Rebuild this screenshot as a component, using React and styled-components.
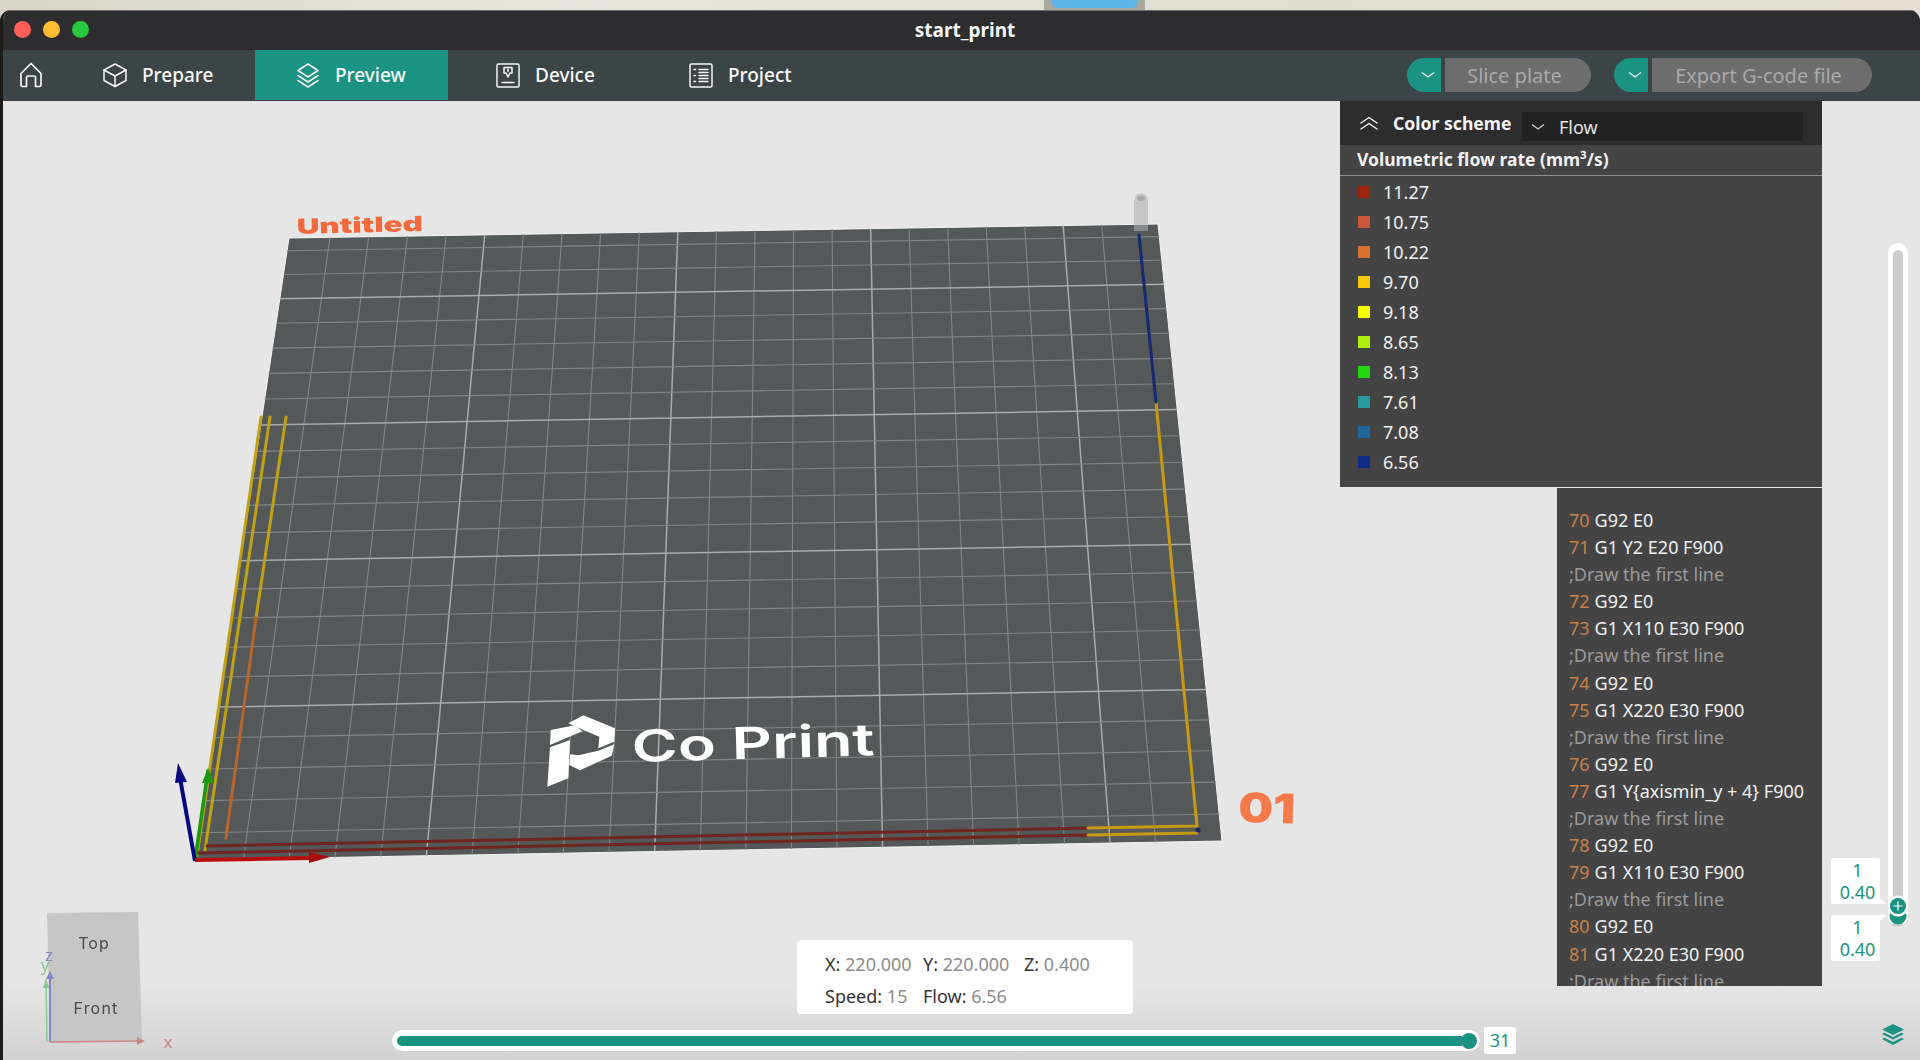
import React from 'react';
import styled, { createGlobalStyle } from 'styled-components';

const TEAL = '#1a9382';
const FONT = '"Noto Sans", "Open Sans", Arial, sans-serif';

const GlobalStyle = createGlobalStyle`
  html, body {
    margin: 0;
    padding: 0;
    background: #e6e6e6;
  }
  body {
    font-family: ${FONT};
  }
`;

const Page = styled.div`
  width: 1920px;
  height: 1060px;
  display: flex;
  flex-direction: column;
  overflow: hidden;
  background: linear-gradient(90deg, #d9d5cb, #e8e6de 30%, #dfdfd4 60%, #e6ded2);
`;

const Wallpaper = styled.div`
  height: 10px;
  flex: none;
  padding-left: 1044px;
`;

const DockTab = styled.div`
  width: 101px;
  height: 10px;
  box-sizing: border-box;
  padding: 0 8px 2px;
  background: #a9a9a2;

  &::before {
    content: '';
    display: block;
    height: 100%;
    background: #5cb4e8;
    border-radius: 0 0 5px 5px;
  }
`;

const Window = styled.div`
  flex: 1;
  min-height: 0;
  display: flex;
  flex-direction: column;
  border-left: 3px solid #1d1b17;
  border-radius: 11px 11px 0 0;
  overflow: hidden;
`;

const TitleBar = styled.div`
  height: 40px;
  flex: none;
  display: flex;
  align-items: center;
  position: relative;
  padding: 0 0 2px 11px;
  gap: 12px;
  background: #2d2d2f;
  border-top: 1px solid #6d6d6d;
  box-sizing: border-box;
`;

const Light = styled.span`
  width: 17px;
  height: 17px;
  border-radius: 50%;
  background: ${({ $color }) => $color};
`;

const Title = styled.div`
  position: absolute;
  left: 862px;
  width: 200px;
  text-align: center;
  color: #f6f6f6;
  font-size: 19px;
  font-weight: 700;
`;

const Toolbar = styled.div`
  height: 51px;
  flex: none;
  display: flex;
  align-items: stretch;
  padding-right: 48px;
  background: #3b4446;
  border-bottom: 1px solid #343c3e;
  box-sizing: border-box;
`;

const HomeTab = styled.div`
  width: 59px;
  box-sizing: border-box;
  padding-left: 16px;
  display: flex;
  align-items: center;
`;

const Tab = styled.div`
  width: 193px;
  box-sizing: border-box;
  padding-left: ${({ $pad }) => $pad}px;
  display: flex;
  align-items: center;
  gap: 14px;
  color: #f8f8f8;
  font-size: 19px;
  font-weight: 500;
  background: ${({ $active }) => ($active ? TEAL : 'transparent')};
`;

const Actions = styled.div`
  margin-left: auto;
  display: flex;
  align-items: center;
  gap: 23px;
`;

const ActionGroup = styled.div`
  display: flex;
  gap: 4px;
`;

const ActionToggle = styled.div`
  width: 34px;
  height: 34px;
  box-sizing: border-box;
  padding-left: 7px;
  display: flex;
  align-items: center;
  justify-content: center;
  background: ${TEAL};
  border-radius: 17px 0 0 17px;
`;

const ActionButton = styled.div`
  width: ${({ $width }) => $width}px;
  height: 34px;
  box-sizing: border-box;
  padding-right: 7px;
  display: flex;
  align-items: center;
  justify-content: center;
  background: #6d6d6d;
  border-radius: 0 17px 17px 0;
  color: #a9a9a9;
  font-size: 20px;
`;

const Viewport = styled.div`
  flex: 1;
  min-height: 0;
  position: relative;
  background: linear-gradient(180deg, #e6e6e6 0, #e6e6e6 92%, #d2d2d2 100%);
`;

const Scene = styled.svg`
  position: absolute;
  left: -3px;
  top: -101px;
  filter: blur(0.4px);
`;

const RightColumn = styled.div`
  position: absolute;
  top: 0;
  right: 98px;
  display: flex;
  flex-direction: column;
  align-items: flex-end;
  gap: 1px;
`;

const Legend = styled.div`
  width: 482px;
  height: 386px;
  background: #444;
  color: #f0f0f0;
  font-size: 18px;
`;

const LegendHeader = styled.div`
  height: 44px;
  display: flex;
  align-items: center;
  padding-left: 19px;
  background: #2d2d2d;
`;

const HeaderLabel = styled.div`
  width: 129px;
  margin-left: 14px;
  font-size: 17.6px;
  font-weight: 700;
  color: #f4f4f4;
  white-space: nowrap;
`;

const Select = styled.div`
  width: 281px;
  height: 29px;
  margin-top: 7px;
  display: flex;
  align-items: center;
  gap: 13px;
  padding-left: 8px;
  box-sizing: border-box;
  background: #222;
  border-radius: 2px;
  color: #e4e4e4;
`;

const LegendTitle = styled.div`
  height: 31px;
  line-height: 28px;
  padding-left: 17px;
  box-sizing: border-box;
  font-size: 17.5px;
  font-weight: 700;
  color: #f2f2f2;
  border-bottom: 1px solid #8c8c8c;
`;

const LegendList = styled.div`
  padding-top: 1px;
`;

const LegendRow = styled.div`
  height: 30px;
  display: flex;
  align-items: center;
  padding-left: 18px;
  gap: 13px;
`;

const Swatch = styled.span`
  width: 12px;
  height: 12px;
  background: ${({ $color }) => $color};
`;

const CodePanel = styled.div`
  width: 265px;
  height: 498px;
  box-sizing: border-box;
  padding: 19px 0 0 12px;
  overflow: hidden;
  background: #444;
  color: #f0f0f0;
  font-size: 18px;
`;

const CodeLine = styled.div`
  height: 27.1px;
  line-height: 27px;
  white-space: nowrap;
  color: ${({ $comment }) => ($comment ? '#9a9a9a' : '#f0f0f0')};
`;

const LineNo = styled.span`
  color: #c98048;
  margin-right: 5px;
`;

const LayerSlider = styled.div`
  position: absolute;
  top: 142px;
  right: 12px;
  width: 20px;
  height: 683px;
  padding: 7px 5px 0;
  box-sizing: border-box;
  background: #fff;
  border-radius: 10px;
`;

const LayerTrack = styled.div`
  height: 100%;
  background: #cdcdcd;
  border-radius: 5px 5px 0 0;
`;

const LayerHandle = styled.svg`
  position: absolute;
  left: 0;
  bottom: -1px;
`;

const ValueTip = styled.div`
  position: absolute;
  right: 28px;
  top: ${({ $top }) => $top}px;
  width: 49px;
  height: 46px;
  background: #fff;
  border-radius: 2px;
  color: ${TEAL};
  font-size: 18px;
  line-height: 22px;
  text-align: center;
  padding: 1px 0 0 4px;
  box-sizing: border-box;

  &::after {
    content: '';
    position: absolute;
    right: -6px;
    ${({ $up }) => ($up ? 'bottom: 0;' : 'top: 0;')}
    border-left: 7px solid #fff;
    ${({ $up }) => ($up ? 'border-top' : 'border-bottom')}: 7px solid transparent;
  }
`;

const LayersButton = styled.svg`
  position: absolute;
  right: 15px;
  bottom: 13px;
`;

const InfoBox = styled.div`
  position: absolute;
  left: 794px;
  bottom: 46px;
  width: 336px;
  height: 74px;
  box-sizing: border-box;
  padding: 8px 0 0 28px;
  display: grid;
  grid-template-columns: 98px 101px auto;
  grid-auto-rows: 32px;
  align-items: center;
  background: #fff;
  border-radius: 4px;
  color: #333;
  font-size: 18px;
  white-space: nowrap;
`;

const InfoValue = styled.span`
  color: #8c8c8c;
`;

const MoveSlider = styled.div`
  position: absolute;
  left: 389px;
  bottom: 9px;
  width: 1088px;
  height: 21px;
  box-sizing: border-box;
  padding: 6px 18px 5px 5px;
  background: #fff;
  border-radius: 11px;
`;

const MoveFill = styled.div`
  height: 100%;
  background: ${TEAL};
  border-radius: 5px 0 0 5px;
`;

const MoveKnob = styled.div`
  position: absolute;
  right: 3px;
  top: 2.5px;
  width: 16px;
  height: 16px;
  background: ${TEAL};
  border-radius: 50%;
`;

const MoveTip = styled.div`
  position: absolute;
  left: 1092px;
  top: -3px;
  width: 32px;
  height: 27px;
  line-height: 27px;
  text-align: center;
  background: #fff;
  border-radius: 2px;
  color: ${TEAL};
  font-size: 18px;
`;

const legend = [
  ['11.27', '#9c2411'],
  ['10.75', '#c9563b'],
  ['10.22', '#d9702c'],
  ['9.70', '#f6c80a'],
  ['9.18', '#fafa04'],
  ['8.65', '#aeee0c'],
  ['8.13', '#26d60c'],
  ['7.61', '#2a9aa0'],
  ['7.08', '#1b6798'],
  ['6.56', '#0e2c86'],
];

const COMMENT = ';Draw the first line';
const code = [
  [70, 'G92 E0'],
  [71, 'G1 Y2 E20 F900'],
  [null, COMMENT],
  [72, 'G92 E0'],
  [73, 'G1 X110 E30 F900'],
  [null, COMMENT],
  [74, 'G92 E0'],
  [75, 'G1 X220 E30 F900'],
  [null, COMMENT],
  [76, 'G92 E0'],
  [77, 'G1 Y{axismin_y + 4} F900'],
  [null, COMMENT],
  [78, 'G92 E0'],
  [79, 'G1 X110 E30 F900'],
  [null, COMMENT],
  [80, 'G92 E0'],
  [81, 'G1 X220 E30 F900'],
  [null, COMMENT],
];

// bed corners on screen, unit square -> quad
const makeBedMap = ([x0, y0], [x1, y1], [x2, y2], [x3, y3]) => {
  const sx = x0 - x1 + x2 - x3;
  const sy = y0 - y1 + y2 - y3;
  const dx1 = x1 - x2;
  const dx2 = x3 - x2;
  const dy1 = y1 - y2;
  const dy2 = y3 - y2;
  const den = dx1 * dy2 - dx2 * dy1;
  const g = (sx * dy2 - dx2 * sy) / den;
  const h = (dx1 * sy - sx * dy1) / den;
  const a = x1 - x0 + g * x1;
  const b = x3 - x0 + h * x3;
  const d = y1 - y0 + g * y1;
  const e = y3 - y0 + h * y3;
  return (u, v) => {
    const w = g * u + h * v + 1;
    return [(a * u + b * v + x0) / w, (d * u + e * v + y0) / w];
  };
};

const bed = makeBedMap([289, 238], [1158, 224], [1222, 841], [195, 860]);

const gridLines = [];
for (let n = 0; n < 21; n++) {
  const u = 0.047 + 0.0444 * n;
  gridLines.push({ from: bed(u, 0), to: bed(u, 1), major: n % 5 === 4 });
}
for (let k = 0; k < 22; k++) {
  const v = 0.024 + 0.0447 * k;
  gridLines.push({ from: bed(0, v), to: bed(1, v), major: k % 5 === 2 });
}

const Stroke = ({ d, color, width = 3 }) => (
  <path d={d} fill="none" stroke={color} strokeWidth={width} strokeLinecap="round" />
);

const BedScene = () => (
  <Scene width="1920" height="1060" viewBox="0 0 1920 1060">
    <polygon points="289,238 1158,224 1222,841 195,860" fill="#555859" stroke="#f4f4f4" strokeWidth="1" />
    {gridLines.map(({ from, to, major }, i) => (
      <line
        key={i}
        x1={from[0]}
        y1={from[1]}
        x2={to[0]}
        y2={to[1]}
        stroke={major ? '#a8abab' : '#828585'}
        strokeWidth={major ? 1.5 : 1.1}
      />
    ))}

    <text
      fontFamily={'Inter, "Open Sans", sans-serif'}
      fontWeight="900"
      fontSize="21"
      fill="#f2693d"
      textLength="126"
      lengthAdjust="spacingAndGlyphs"
      transform="translate(297 234) rotate(-1.4)"
    >
      Untitled
    </text>
    <text
      fontFamily={'Inter, "Open Sans", sans-serif'}
      fontWeight="900"
      fontSize="41"
      fill="#f47a4c"
      textLength="57"
      lengthAdjust="spacingAndGlyphs"
      transform="translate(1238 822) rotate(1.5)"
    >
      01
    </text>

    <g transform="translate(520 690) scale(0.3333)" fill="#fff">
      <polygon points="92,120 165,106 187,124 90,165" />
      <polygon points="90,172 150,150 145,265 82,290" />
      <polygon points="145,100 190,76 285,115 283,155 235,175 238,140 185,118" />
      <polygon points="283,163 275,197 180,241 148,225 150,193 175,196 235,182" />
    </g>
    <text
      fontFamily={'Inter, "Open Sans", sans-serif'}
      fontWeight="600"
      fontSize="44"
      fill="#fff"
      textLength="243"
      lengthAdjust="spacingAndGlyphs"
      transform="translate(632 762) rotate(-1.6)"
    >
      Co Print
    </text>

    <Stroke d="M261 417 L197 856" color="#bfa312" />
    <Stroke d="M270 417 L205 850" color="#bfa312" />
    <Stroke d="M286 417 L256 618" color="#bfa312" />
    <Stroke d="M256 618 L226 838" color="#b8662c" />
    <Stroke d="M207 846 L1088 828" color="#6e251d" />
    <Stroke d="M198 853 L1088 835" color="#6e251d" />
    <Stroke d="M1088 828 L1197 826 L1156 402" color="#c49a12" />
    <Stroke d="M1088 835 L1197 833" color="#c49a12" />
    <Stroke d="M1139 235 L1156 402" color="#16296e" />
    <circle cx="1198" cy="830" r="2.5" fill="#16296e" />

    <rect x="1134" y="200" width="14" height="25" fill="#c6c6c6" />
    <rect x="1134" y="225" width="14" height="6" fill="#c6c6c6" opacity="0.45" />
    <ellipse cx="1141" cy="199" rx="6.5" ry="5.5" fill="#c6c6c6" />
    <ellipse cx="1141" cy="198.5" rx="4" ry="2.5" fill="#a8a8a8" />

    <path d="M195 861 L208 770" stroke="#1a9a10" strokeWidth="3.5" fill="none" />
    <polygon points="208,768 214,783 202,783" fill="#1a9a10" />
    <path d="M195 861 L180 778" stroke="#07087e" strokeWidth="4" fill="none" />
    <polygon points="178,763 187,782 175,783" fill="#07087e" />
    <path d="M195 860 L312 858" stroke="#b80e0e" strokeWidth="4" fill="none" />
    <polygon points="330,857 309,852 309,863" fill="#a90c0c" />

    <polygon points="47,913 138,912 142,1040 50,1042" fill="#c6c6c6" />
    <text x="94" y="949" fontFamily="Inter, sans-serif" fontSize="16" fill="#4a4a4a" textAnchor="middle" letterSpacing="1">Top</text>
    <text x="96" y="1014" fontFamily="Inter, sans-serif" fontSize="16" fill="#4a4a4a" textAnchor="middle" letterSpacing="1.2">Front</text>
    <path d="M47 1042 L46 982" stroke="#8cc88c" strokeWidth="1.5" />
    <polygon points="46,978 49,988 43,988" fill="#8cc88c" />
    <path d="M50 1042 L50 975" stroke="#8088c8" strokeWidth="2" />
    <polygon points="50,971 54,979 46,979" fill="#8088c8" />
    <path d="M50 1042 L138 1041" stroke="#c98686" strokeWidth="1.5" />
    <polygon points="145,1041 137,1037 137,1045" fill="#c98686" />
    <text x="49" y="961" fontFamily={FONT} fontSize="17" fill="#8088c8" textAnchor="middle">z</text>
    <text x="45" y="971" fontFamily={FONT} fontSize="17" fill="#8cc88c" textAnchor="middle">y</text>
    <text x="168" y="1048" fontFamily={FONT} fontSize="17" fill="#c98686" textAnchor="middle">x</text>
  </Scene>
);

const LineIcon = ({ size = 26, height, children, color = '#f6f6f6', width = 1.5 }) => (
  <svg
    width={size}
    height={height || size}
    viewBox={`0 0 ${size} ${height || size}`}
    fill="none"
    stroke={color}
    strokeWidth={width}
    strokeLinejoin="round"
    strokeLinecap="round"
  >
    {children}
  </svg>
);

const HomeIcon = () => (
  <LineIcon size={24} height={28} width={1.7}>
    <path d="M2 12.5 L12 2.5 L22 12.5 V24 Q22 25.5 20.5 25.5 H16.5 V16.5 Q16.5 15 15 15 H9 Q7.5 15 7.5 16.5 V25.5 H3.5 Q2 25.5 2 24 Z" />
  </LineIcon>
);

const PrepareIcon = () => (
  <LineIcon>
    <path d="M13 2 L24 8 V18.5 L13 24.5 L2 18.5 V8 Z" />
    <path d="M2 8 L13 14 L24 8 M13 14 V24.5" />
  </LineIcon>
);

const PreviewIcon = () => (
  <LineIcon>
    <path d="M13 2 L23 8.5 L13 15 L3 8.5 Z" />
    <path d="M3 13.5 L13 20 L23 13.5" />
    <path d="M3 18.5 L13 25 L23 18.5" />
  </LineIcon>
);

const DeviceIcon = () => (
  <LineIcon>
    <rect x="2" y="2" width="22" height="23" rx="1.5" />
    <path d="M9 5.5 H17 V11 H15 L13 15 L11 11 H9 Z" />
    <path d="M13 7 V9.5 M7 20.5 H19" />
  </LineIcon>
);

const ProjectIcon = () => (
  <LineIcon>
    <rect x="2" y="2" width="22" height="23" rx="1.5" />
    <path d="M6 7.5 H7.5 M6 13.5 H7.5 M6 19.5 H7.5 M11 7.5 H20 M11 10.5 H20 M11 13.5 H20 M11 16.5 H20 M11 19.5 H20" />
  </LineIcon>
);

const Chevron = ({ width = 14, color = '#f4f4f4' }) => (
  <svg width={width} height="8" viewBox="0 0 14 8" fill="none" stroke={color} strokeWidth="1.3">
    <path d="M1 1.5 L7 6 L13 1.5" />
  </svg>
);

const DoubleChevronUp = () => (
  <LineIcon size={20} height={16} width={1.4}>
    <path d="M2 8 L10 2.5 L18 8 M2 14 L10 8.5 L18 14" />
  </LineIcon>
);

const App = () => (
  <>
    <GlobalStyle />
    <Page>
      <Wallpaper>
        <DockTab />
      </Wallpaper>
      <Window>
        <TitleBar>
          <Light $color="#ff5f57" />
          <Light $color="#febc2e" />
          <Light $color="#28c840" />
          <Title>start_print</Title>
        </TitleBar>
        <Toolbar>
          <HomeTab>
            <HomeIcon />
          </HomeTab>
          <Tab $pad={40}>
            <PrepareIcon />
            Prepare
          </Tab>
          <Tab $pad={40} $active>
            <PreviewIcon />
            Preview
          </Tab>
          <Tab $pad={47}>
            <DeviceIcon />
            Device
          </Tab>
          <Tab $pad={47}>
            <ProjectIcon />
            Project
          </Tab>
          <Actions>
            <ActionGroup>
              <ActionToggle>
                <Chevron />
              </ActionToggle>
              <ActionButton $width={146}>Slice plate</ActionButton>
            </ActionGroup>
            <ActionGroup>
              <ActionToggle>
                <Chevron />
              </ActionToggle>
              <ActionButton $width={220}>Export G-code file</ActionButton>
            </ActionGroup>
          </Actions>
        </Toolbar>
        <Viewport>
          <BedScene />
          <RightColumn>
            <Legend>
              <LegendHeader>
                <DoubleChevronUp />
                <HeaderLabel>Color scheme</HeaderLabel>
                <Select>
                  <Chevron width={16} color="#cfcfcf" />
                  Flow
                </Select>
              </LegendHeader>
              <LegendTitle>Volumetric flow rate (mm³/s)</LegendTitle>
              <LegendList>
                {legend.map(([value, color]) => (
                  <LegendRow key={value}>
                    <Swatch $color={color} />
                    {value}
                  </LegendRow>
                ))}
              </LegendList>
            </Legend>
            <CodePanel>
              {code.map(([no, text], i) => (
                <CodeLine key={i} $comment={no === null}>
                  {no !== null && <LineNo>{no}</LineNo>}
                  {text}
                </CodeLine>
              ))}
            </CodePanel>
          </RightColumn>

          <LayerSlider>
            <LayerTrack />
            <ValueTip $top={615} $up>
              1
              <br />
              0.40
            </ValueTip>
            <ValueTip $top={672}>
              1
              <br />
              0.40
            </ValueTip>
            <LayerHandle width="20" height="34" viewBox="0 0 20 34">
              <circle cx="10" cy="23" r="8.5" fill={TEAL} />
              <circle cx="10" cy="13" r="10.5" fill="#fff" />
              <circle cx="10" cy="13" r="8" fill={TEAL} />
              <path d="M10 8.5 V17.5 M5.5 13 H14.5" stroke="#fff" strokeWidth="1.2" />
            </LayerHandle>
          </LayerSlider>

          <InfoBox>
            <span>
              X: <InfoValue>220.000</InfoValue>
            </span>
            <span>
              Y: <InfoValue>220.000</InfoValue>
            </span>
            <span>
              Z: <InfoValue>0.400</InfoValue>
            </span>
            <span>
              Speed: <InfoValue>15</InfoValue>
            </span>
            <span>
              Flow: <InfoValue>6.56</InfoValue>
            </span>
          </InfoBox>

          <MoveSlider>
            <MoveFill />
            <MoveKnob />
            <MoveTip>31</MoveTip>
          </MoveSlider>

          <LayersButton width="24" height="24" viewBox="0 0 24 24" fill={TEAL}>
            <path d="M12 1 L23 6.5 L12 12 L1 6.5 Z" />
            <path d="M1 11 L3.5 9.8 L12 14 L20.5 9.8 L23 11 L12 16.5 Z" />
            <path d="M1 16 L3.5 14.8 L12 19 L20.5 14.8 L23 16 L12 22 Z" />
          </LayersButton>
        </Viewport>
      </Window>
    </Page>
  </>
);

export default App;
